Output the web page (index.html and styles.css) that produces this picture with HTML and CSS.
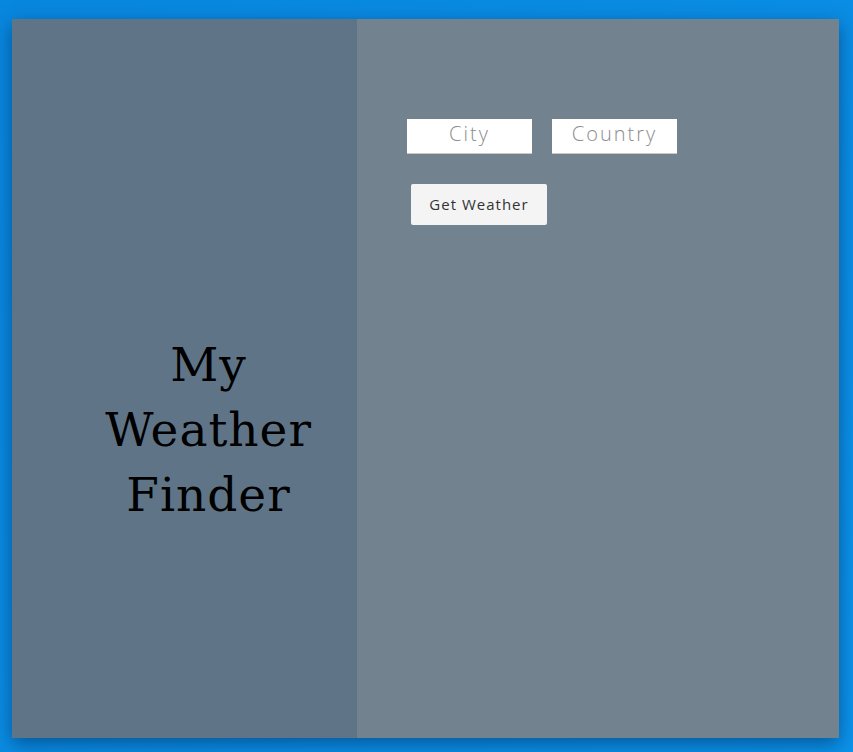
FILE: index.html
```html
<!DOCTYPE html>
<html>
<head>
<meta charset="utf-8">
<title>My Weather Finder</title>
<link rel="stylesheet" href="styles.css">
</head>
<body>
<div class="app">
  <div class="title-panel">
    <h1 class="title">My<br>Weather<br>Finder</h1>
  </div>
  <div class="form-panel">
    <form class="form">
      <div class="inputs">
        <input class="field" type="text" placeholder="City">
        <input class="field" type="text" placeholder="Country">
      </div>
      <button class="btn" type="button">Get Weather</button>
    </form>
  </div>
</div>
</body>
</html>
```
FILE: styles.css
```css
html, body {
  margin: 0;
  height: 100%;
}
body {
  background: linear-gradient(135deg, #0887de 0%, #0a8de4 50%, #0b93ea 100%);
  padding: 19px 14px 14px 12px;
  box-sizing: border-box;
  font-family: "Open Sans", sans-serif;
}
.app {
  display: flex;
  width: 827px;
  height: 719px;
  box-shadow: 0 6px 18px rgba(0, 40, 90, 0.55);
}
.title-panel {
  width: 345px;
  box-sizing: border-box;
  padding-left: 48px;
  background: #5f7587;
  display: flex;
  align-items: center;
  justify-content: center;
}
.title {
  margin: 0;
  margin-top: 102px;
  font-family: "DejaVu Serif", serif;
  font-weight: normal;
  font-size: 47px;
  line-height: 65px;
  letter-spacing: 1px;
  text-align: center;
  color: #000;
}
.form-panel {
  flex: 1;
  background: #72838f;
  padding: 100px 50px;
}
.form {
  display: flex;
  flex-direction: column;
  align-items: flex-start;
}
.inputs {
  display: flex;
  gap: 20px;
}
.field {
  width: 125px;
  height: 35px;
  box-sizing: border-box;
  border: none;
  border-bottom: 1px solid #c9c9c9;
  background: #fff;
  font-family: "Open Sans", sans-serif;
  font-weight: 300;
  font-size: 20px;
  letter-spacing: 2px;
  text-align: center;
  color: #555;
  padding: 0 0 5px 0;
  outline: none;
}
.field::placeholder {
  color: #8c8c8c;
}
.btn {
  margin: 30px 0 0 4px;
  width: 136px;
  height: 41px;
  border: none;
  border-radius: 2px;
  background: #f4f4f4;
  font-family: "Open Sans", sans-serif;
  font-size: 15px;
  letter-spacing: 1px;
  color: #333;
  padding: 0 0 2px 0;
}
```
